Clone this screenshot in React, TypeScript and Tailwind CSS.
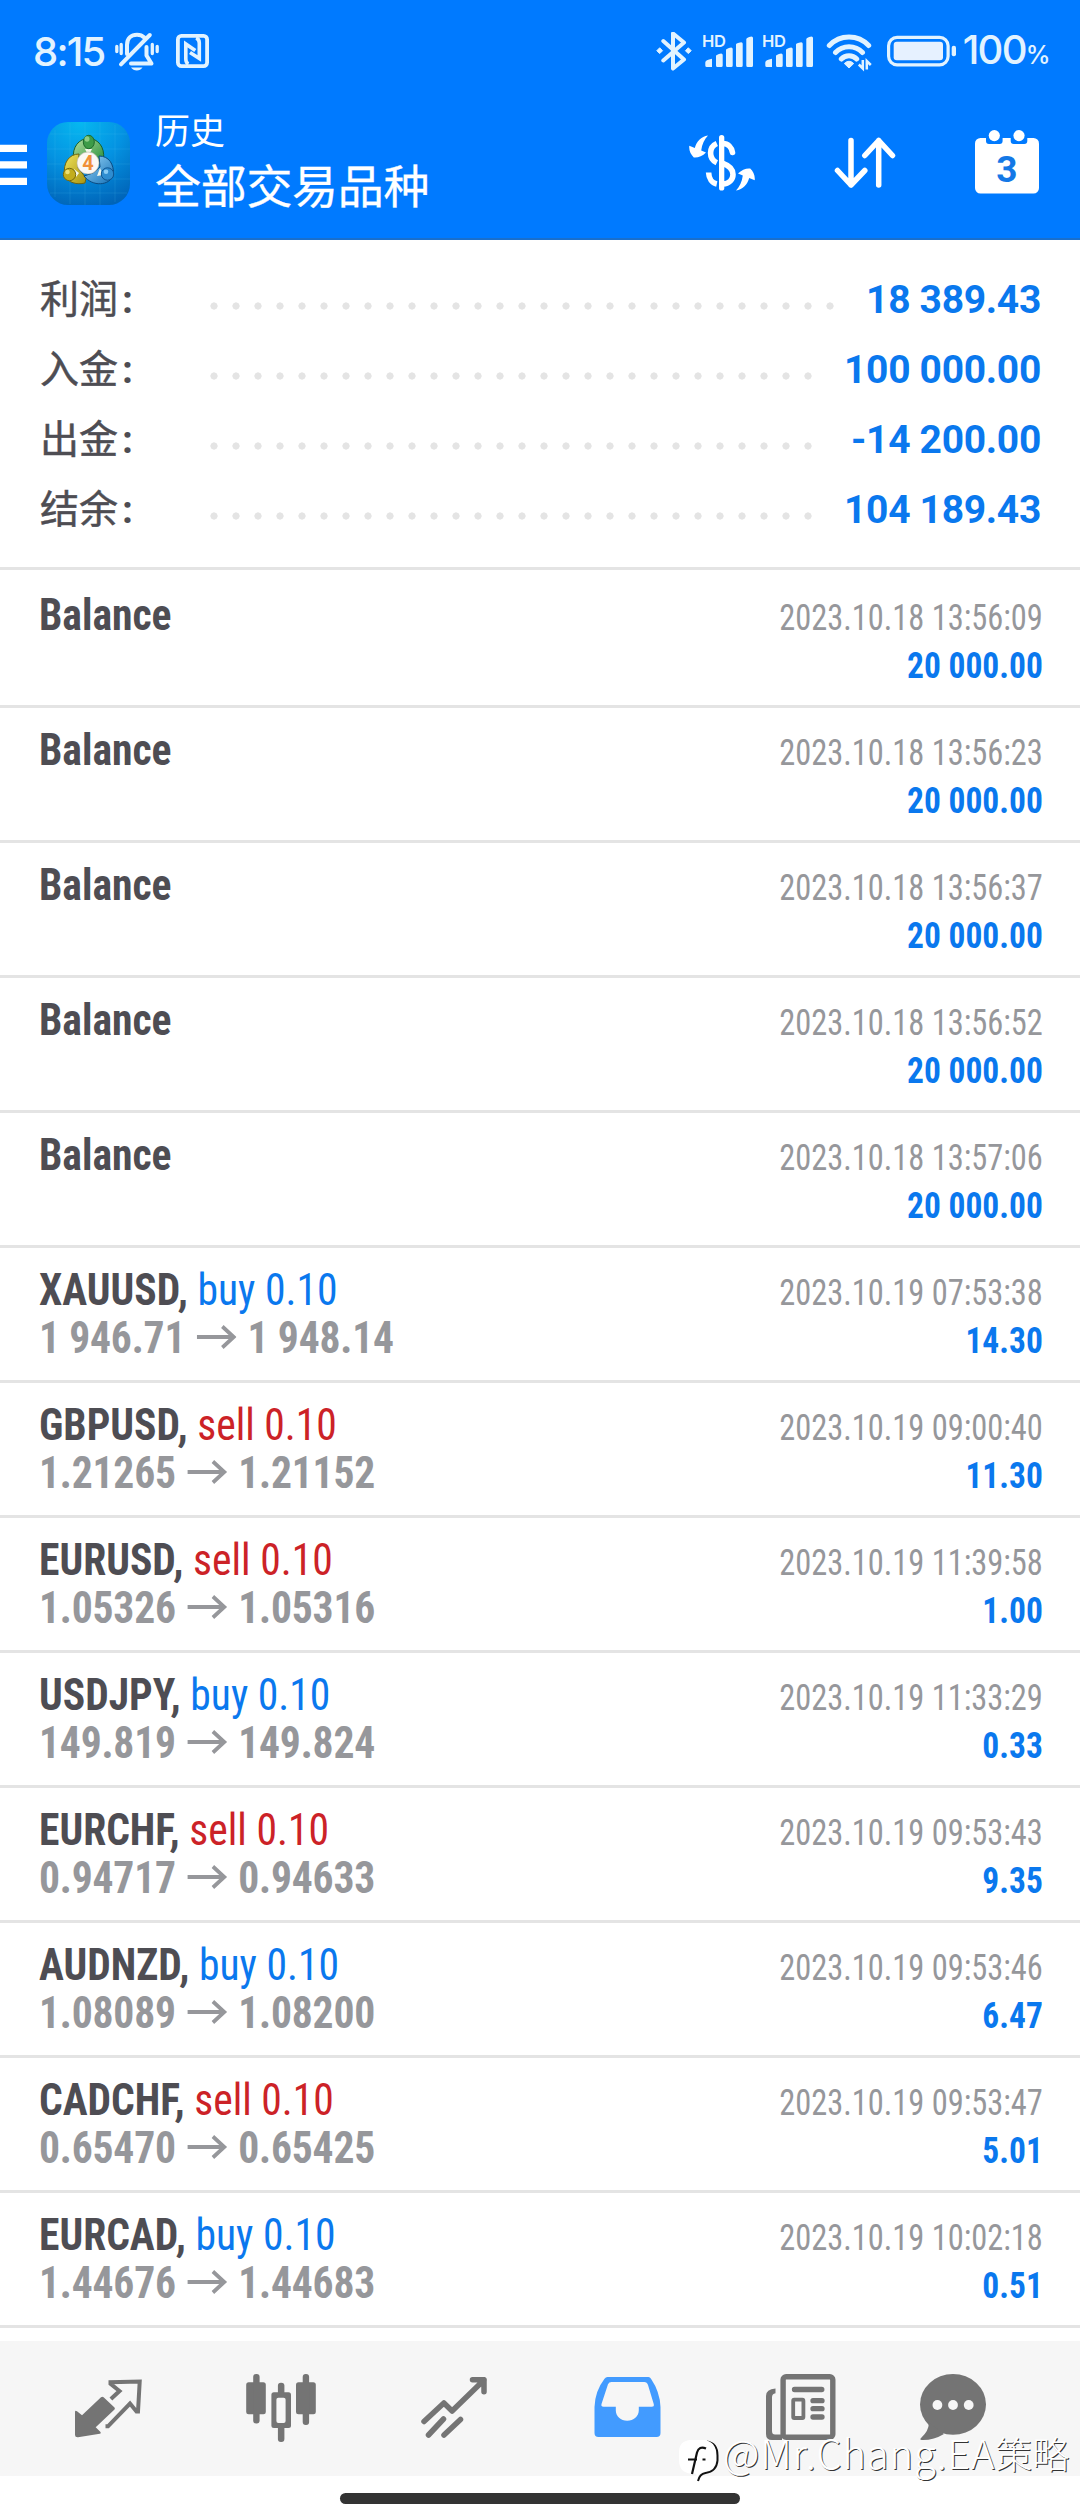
import type { ReactNode } from "react";

const summary = [
  { label: "利润", value: "18 389.43", dots: "w-[638px]" },
  { label: "入金", value: "100 000.00", dots: "w-[616px]" },
  { label: "出金", value: "-14 200.00", dots: "w-[616px]" },
  { label: "结余", value: "104 189.43", dots: "w-[616px]" },
];

const balances = [
  { time: "2023.10.18 13:56:09", amount: "20 000.00" },
  { time: "2023.10.18 13:56:23", amount: "20 000.00" },
  { time: "2023.10.18 13:56:37", amount: "20 000.00" },
  { time: "2023.10.18 13:56:52", amount: "20 000.00" },
  { time: "2023.10.18 13:57:06", amount: "20 000.00" },
];

const deals = [
  { symbol: "XAUUSD", side: "buy", open: "1 946.71", close: "1 948.14", time: "2023.10.19 07:53:38", profit: "14.30" },
  { symbol: "GBPUSD", side: "sell", open: "1.21265", close: "1.21152", time: "2023.10.19 09:00:40", profit: "11.30" },
  { symbol: "EURUSD", side: "sell", open: "1.05326", close: "1.05316", time: "2023.10.19 11:39:58", profit: "1.00" },
  { symbol: "USDJPY", side: "buy", open: "149.819", close: "149.824", time: "2023.10.19 11:33:29", profit: "0.33" },
  { symbol: "EURCHF", side: "sell", open: "0.94717", close: "0.94633", time: "2023.10.19 09:53:43", profit: "9.35" },
  { symbol: "AUDNZD", side: "buy", open: "1.08089", close: "1.08200", time: "2023.10.19 09:53:46", profit: "6.47" },
  { symbol: "CADCHF", side: "sell", open: "0.65470", close: "0.65425", time: "2023.10.19 09:53:47", profit: "5.01" },
  { symbol: "EURCAD", side: "buy", open: "1.44676", close: "1.44683", time: "2023.10.19 10:02:18", profit: "0.51" },
];

function Signal({ className }: { className: string }) {
  return (
    <svg className={className} width="50" height="40" viewBox="0 0 50 40" fill="currentColor">
      <text x="-1" y="15" fontSize="16.5" fontWeight="600" fontFamily="Inter, sans-serif" letterSpacing="-0.3">
        HD
      </text>
      <path d="M2.3 30.5q0-2.5 6.7-3.7V35H3.8q-1.5 0-1.5-1.5zM13 24q0-1.5 5.2-2.5 1.5 0 1.5 1.5v10.5q0 1.5-1.5 1.5h-3.7q-1.5 0-1.5-1.5zM23 18q0-1.5 5.2-2.5 1.5 0 1.5 1.5v16.5q0 1.5-1.5 1.5h-3.7q-1.5 0-1.5-1.5zM33 12.5q0-1.5 5.2-2.3 1.5 0 1.5 1.5v21.8q0 1.5-1.5 1.5h-3.7q-1.5 0-1.5-1.5zM43.3 7q0-1.5 5.2-2.6 1.5 0 1.5 1.5v27.6q0 1.5-1.5 1.5h-3.7q-1.5 0-1.5-1.5z" />
    </svg>
  );
}

function StatusBar() {
  return (
    <div className="flex h-[104px] items-center text-[#e2f3ff]">
      <span className="ml-[33px] w-[82px] font-[Inter,sans-serif] text-[40px] leading-[48px] font-medium tracking-[-1.8px]">
        8:15
      </span>
      <svg width="44" height="40" viewBox="0 0 44 40" fill="none" stroke="currentColor" strokeLinecap="round">
        <path d="M1.8 14.5v5M6.2 12.5v9M37.3 12.5v9M42.2 14.5v5" strokeWidth="3.3" />
        <path d="M12 22V13C12 6 16.5 2.7 22 2.7c3 0 5.5 1 7.3 2.8M31.5 15v8.5l5 8H16" strokeWidth="4" strokeLinejoin="round" />
        <path d="M6 32.3 34.8 3" strokeWidth="4" />
        <path d="M16 35.5h11.5q-2 3-5.7 3t-5.800-3z" fill="currentColor" stroke="none" />
      </svg>
      <svg className="ml-[17px]" width="33" height="40" viewBox="0 0 33 40" fill="none" stroke="currentColor">
        <rect x="1.9" y="3.9" width="29.2" height="30.2" rx="3.5" strokeWidth="3.8" />
        <path d="M12.5 32q-2.7-1-2.7-5V12l9.5 6.5M20 6q3.3 1 3.3 5v15.5L14 20.5" strokeWidth="3.6" />
      </svg>

      <svg className="ml-auto" width="36" height="40" viewBox="0 1 36 40" fill="none" stroke="currentColor">
        <path d="M7.3 10 28 28.5l-11 9V2.5l11 9L7.3 29.5" strokeWidth="4" strokeLinecap="round" strokeLinejoin="round" />
        <path d="M.8 19.7l2.9-2.9 2.9 2.9-2.9 2.9zM29.4 19.7l2.9-2.9 2.9 2.9-2.9 2.9z" fill="currentColor" strokeLinejoin="round" />
      </svg>
      <Signal className="ml-[11px]" />
      <Signal className="ml-[10px]" />
      <svg className="ml-[13px]" width="46" height="40" viewBox="0 -2 46 40" fill="none" stroke="currentColor">
        <path d="M3.3 11.5a27 27 0 0 1 39.4 0M9.5 18.5a18.5 18.5 0 0 1 27 0M15.3 25a10.5 10.5 0 0 1 15.4 0" strokeWidth="5" strokeLinecap="round" />
        <path d="M18.3 29.5q4.7-4.5 9.4 0L23 34z" fill="currentColor" strokeLinejoin="round" />
        <path d="M36.8 26v8.5l-4-4M40.8 35.5V27l4 4" strokeWidth="2.5" />
      </svg>
      <svg className="ml-[15px]" width="69" height="40" viewBox="0 -3 69 40" fill="currentColor">
        <rect x="1.6" y="2.3" width="59.5" height="27.5" rx="8.5" fill="none" stroke="currentColor" strokeWidth="3.2" />
        <rect x="6.7" y="6.7" width="49.3" height="18.6" rx="3" fill="#e6f1ff" />
        <rect x="64.7" y="10.7" width="4.3" height="10.6" rx="2" />
      </svg>
      <span className="mr-[29.5px] ml-[7px] flex items-baseline font-[Inter,sans-serif] text-[40px] leading-[48px] font-medium tracking-[-1.8px]">
        100<span className="text-[25px] tracking-normal">%</span>
      </span>
    </div>
  );
}

function AppLogo() {
  return (
    <svg className="-mt-2 ml-5" width="83" height="83" viewBox="0 0 83 83">
      <defs>
        <radialGradient id="tile" cx="0.4" cy="0" r="1.05">
          <stop offset="0" stopColor="#06b8f0" />
          <stop offset="0.5" stopColor="#0493e2" />
          <stop offset="1" stopColor="#0064b8" />
        </radialGradient>
        <linearGradient id="green" x1="0" y1="0" x2="1" y2="1">
          <stop offset="0" stopColor="#b4dfa0" />
          <stop offset="1" stopColor="#1f8a35" />
        </linearGradient>
        <linearGradient id="yellow" x1="0" y1="0" x2="1" y2="1">
          <stop offset="0" stopColor="#f0e35c" />
          <stop offset="1" stopColor="#a89410" />
        </linearGradient>
        <linearGradient id="blue" x1="0" y1="0" x2="1" y2="1">
          <stop offset="0" stopColor="#9ad6f7" />
          <stop offset="1" stopColor="#1270b8" />
        </linearGradient>
      </defs>
      <rect width="83" height="83" rx="21" fill="url(#tile)" />
      <path d="M8 8v67M23 1v81M38 0v83M53 0v83M68 3v77M3 12h77M0 27h83M0 42h83M0 57h83M3 71h77" stroke="#5cc8f5" strokeOpacity="0.15" />
      <path d="M26.5 37C25 25 32 16.5 41.5 16.5S58 25 56.5 37l-5 6-9-12-9 10z" fill="url(#green)" stroke="#165f2b" />
      <path d="M17.5 53C16 41 22 32 32 32l-1 14 8 10-1 5c-8 2-17 0-20.5-8z" fill="url(#yellow)" stroke="#6c6412" />
      <path d="M52 34c10 0 15 8 14.5 19-4 11-21 12-29.5 1l9-3 7-6z" fill="url(#blue)" stroke="#0b4a80" />
      <path d="M38 27h7l-2 4h-3zM27 47l5 4-3 4zM53 46l3 7-6 1z" fill="#f3f8ec" />
      <ellipse cx="41.8" cy="20" rx="5.5" ry="6.7" fill="#3d9b48" stroke="#1c6a2c" />
      <circle cx="22.5" cy="52.5" r="6.2" fill="#c2ad1d" stroke="#776b10" />
      <circle cx="60.5" cy="52" r="6.2" fill="#2f8dd0" stroke="#0f5591" />
      <ellipse cx="40" cy="17" rx="2.5" ry="2.7" fill="#8ccc86" />
      <circle cx="20.5" cy="50" r="2.3" fill="#ece072" />
      <circle cx="59" cy="49.8" r="2.3" fill="#8accf4" />
      <circle cx="41" cy="41" r="11" fill="#fbf8f4" stroke="#b9b6a8" strokeWidth="0.6" />
      <text x="41" y="48" textAnchor="middle" fontSize="20" fontWeight="700" fontFamily="Roboto, sans-serif" fill="#f09038">
        4
      </text>
    </svg>
  );
}

function Toolbar() {
  return (
    <div className="flex h-[136px] items-start border-b-2 border-[#1a6fcb] pt-[26px] text-white">
      <svg width="27" height="64" viewBox="0 0 27 64" fill="currentColor">
        <path d="M0 14.7h27V22H0zM0 31.2h27v7.3H0zM0 47.7h27V55H0z" />
      </svg>
      <AppLogo />
      <div className="-mt-[23px] ml-[25px] font-['Noto_Sans_CJK_SC',sans-serif]">
        <p className="text-[35px] leading-[44px]">历史</p>
        <h1 className="mt-[4px] text-[46px] leading-[56px] tracking-[-0.3px] [-webkit-text-stroke:0.3px_white]">
          全部交易品种
        </h1>
      </div>
      <div className="mr-[41px] ml-auto flex gap-[79px]">
        <svg width="66" height="64" viewBox="0 -5 66 64" fill="none" stroke="currentColor">
          <rect x="30" y="0" width="5.3" height="55.5" rx="2.6" fill="currentColor" stroke="none" />
          <path d="M27.8 8.5C19.5 12 19.5 24 27.8 27.8M19.6 37.5c.2 6 3.5 10.5 8.2 11.5" strokeWidth="5.6" />
          <path d="M34 8.5c5 0 8.5 3.5 9.5 9" strokeWidth="5.6" strokeLinecap="round" />
          <path d="M34 28.5c7 2.5 10 6 10 11s-4 9.5-10 9.5" strokeWidth="5.6" />
          <g fill="currentColor" stroke="none">
            <path d="M19 .5C12 1.5 7.5 6.5 5.8 13L.3 10.8c-.6 4.5 1.5 9 4.5 11.7 3.8.5 8.7-1.3 12.2-5l-4.8-2C13 9.5 15.5 4 19 .5z" />
            <path d="M19 .5C12 1.5 7.5 6.5 5.8 13L.3 10.8c-.6 4.5 1.5 9 4.5 11.7 3.8.5 8.7-1.3 12.2-5l-4.8-2C13 9.5 15.5 4 19 .5z" transform="rotate(180 33 28)" />
          </g>
        </svg>
        <svg width="62" height="64" viewBox="0 -7 62 64" fill="none" stroke="currentColor" strokeWidth="5.5" strokeLinecap="round" strokeLinejoin="round">
          <path d="M17 3.5V48M3.5 33.5 17 48l13.8-14.5M44.7 48V3.5M30.8 18.5 44.7 3.5l13.8 15" />
        </svg>
        <svg width="64" height="64" viewBox="0 0 64 64" fill="currentColor">
          <rect y="8" width="64" height="55.5" rx="5.5" />
          <path d="M11 4h16.6v7q0 3-3 3H14q-3 0-3-3zM35.7 4h16.6v7q0 3-3 3H38.7q-3 0-3-3z" fill="#007aff" />
          <circle cx="19.3" cy="5.6" r="5.6" />
          <circle cx="44" cy="5.6" r="5.6" />
          <text x="31.8" y="51.8" textAnchor="middle" fontSize="37" fontWeight="700" fontFamily="Roboto, sans-serif" fill="#1478e6">
            3
          </text>
        </svg>
      </div>
    </div>
  );
}

function Row({ left, time, amount }: { left: ReactNode; time: string; amount: string }) {
  return (
    <li className="flex h-[135px] justify-between border-b-3 border-[#e4e4e4] pr-[37.5px] pl-[39px] font-['Roboto_Condensed',Roboto,sans-serif]">
      <div className="origin-left scale-x-[0.945] pt-[18px] text-[44px] leading-[48px]">{left}</div>
      <div className="pt-[21px] text-right text-[36px] leading-[48px]">
        <p className="origin-right scale-x-90 text-[#96979b]">{time}</p>
        <p className="origin-right scale-x-[0.93] font-bold text-[#0a78ee]">{amount}</p>
      </div>
    </li>
  );
}

function PriceArrow() {
  return (
    <svg className="-mt-[3px]" width="42" height="24" viewBox="0 0 42 24" fill="none" stroke="currentColor" strokeWidth="4">
      <path d="M0 12h39M27 1.5 39 12 27 22.5" />
    </svg>
  );
}

function BottomNav() {
  return (
    <nav className="mt-[13px] flex h-[135px] items-start bg-[#f6f6f6] pt-[33px] text-[#747474]">
      <svg className="ml-[75px]" width="67" height="68" viewBox="0 0 67 68" fill="none" stroke="currentColor">
        <path d="M0 38q0-2 2-.8l5 4.1L26 23.3q1.3-1.3 2.6 0L39.5 33.5q.8 1 0 2L20.7 53.3l4.8 4.7q1 1.5-.7 1.8L3 63.3Q0 63.5 0 61z" fill="currentColor" stroke="none" />
        <path d="M35.9 25 44.5 17l-9-7.3v-1.5L64.7 7.5 63 37.5h-1.5L55 29.5 33 52.3h-2.5" strokeWidth="4" />
      </svg>
      <svg className="ml-[104px]" width="70" height="68" viewBox="0 0 70 68" fill="currentColor">
        <rect x="0.2" y="8.3" width="19.6" height="32" rx="2.5" />
        <rect x="7.2" width="6.4" height="49.5" rx="3" />
        <rect x="50" y="8.3" width="19.8" height="32" rx="2.5" />
        <rect x="56.7" width="6.4" height="51" rx="3" />
        <rect x="31.9" y="8.7" width="6.5" height="59.3" rx="3" />
        <rect x="25.4" y="18.3" width="19.6" height="35.7" rx="2.5" />
        <rect x="30.4" y="23.7" width="9.2" height="25.3" rx="2" fill="#f6f6f6" />
      </svg>
      <svg className="ml-[105px]" width="66" height="68" viewBox="0 0 66 68" fill="none" stroke="currentColor" strokeWidth="5.5" strokeLinecap="round" strokeLinejoin="round">
        <path d="M3 47.5 22.9 29l8.2 8L63 6M51.5 5.7H63v12" />
        <path d="M7.5 61 22.5 45M23 61l16.5-15.5" />
      </svg>
      <svg className="ml-[107px]" width="67" height="68" viewBox="0 0 67 68" fill="#429bff" fillRule="evenodd">
        <path d="M13.5 3h41q1.5 0 2.5 1.7Q66 18 66.5 33v26q0 4-4 4h-58q-4 0-4-4V33Q1 17 10.5 4.7 11.8 3 13.5 3zM17.5 8q-2.5 0-3.5 2.3L7.5 30q-.7 2.7 2 2.7h12.3v3.5c0 6 5 10.5 11.4 10.5s11.6-4.5 11.6-10.5v-3.5h13q2.5 0 2-2.5L54 11q-1-3-3.7-3z" />
      </svg>
      <svg className="ml-[105px]" width="70" height="68" viewBox="0 0 70 68" fill="none" stroke="currentColor">
        <rect x="17.1" y="2.7" width="49.7" height="60.5" rx="3" strokeWidth="5.4" />
        <path d="M9.5 14.5v4.8q-3.5.5-3.5 4V57q0 3.5 3 3.5h7V66H6q-6 0-6-6V22q0-7 9.5-7.5z" fill="currentColor" stroke="none" />
        <path d="M28.5 15.5h27.3M47 26.7h9M47 34.7h9M47 43h9" strokeWidth="5.3" strokeLinecap="round" />
        <rect x="27.2" y="25.7" width="10.2" height="18.3" rx="1" strokeWidth="3.8" />
      </svg>
      <svg className="ml-[84px]" width="66" height="68" viewBox="0 0 66 68" fill="currentColor">
        <ellipse cx="33" cy="30.4" rx="33" ry="30.4" />
        <path d="M8.5 48q1.5 7-7 15.5-3 3 1.5 2.5 11 0 21-6z" />
        <g fill="#f6f6f6">
          <circle cx="17.4" cy="31" r="4.9" />
          <circle cx="33" cy="31" r="4.9" />
          <circle cx="48.7" cy="31" r="4.9" />
        </g>
      </svg>
    </nav>
  );
}

function Watermark() {
  return (
    <div className="absolute top-[2436px] left-[679px] flex items-start text-white">
      <svg width="40" height="48" viewBox="0 0 40 48" fill="none">
        <path d="M28 5.5q10.5 2 10.5 14v5q-1 11-12 12.5-6 1-7.5 8" stroke="#111" strokeWidth="2" />
        <path d="M11 4h15q11 2 11 14v4q0 12-11 13.5-6 1-8 6l-1-4H11Q0 36 0 24v-8Q0 5 11 4z" fill="#fff" />
        <path d="M27 12.5q-7-3-9 4L13 38M9 23.5h9M23.5 23.5h3" stroke="#111" strokeWidth="2.2" />
      </svg>
      <p className="-mt-[4px] ml-[4px] flex items-baseline font-['Noto_Sans_CJK_SC',sans-serif] text-[40px] leading-[40px] font-light tracking-[0.8px] text-shadow-[1px_1px_0_#333]">
        @Mr.Chang.EA<span className="text-[37px] tracking-normal">策略</span>
      </p>
    </div>
  );
}

export default function App() {
  return (
    <div className="relative h-[2520px] w-[1080px] overflow-hidden bg-white">
      <header className="bg-[#007aff]">
        <StatusBar />
        <Toolbar />
      </header>

      <section className="border-b-3 border-[#e4e4e4] px-[40px] pt-[25px] pb-[22px]">
        {summary.map((s) => (
          <div key={s.label} className="flex h-[70px] items-center">
            <div className="flex w-[162.5px] items-center text-[#4e4d53]">
              <span className="mb-[9px] font-['Noto_Sans_CJK_SC',sans-serif] text-[39px] leading-[46px] [-webkit-text-stroke:0.5px_#4e4d53]">
                {s.label}
              </span>
              <span className="ml-[4px] font-[Roboto,sans-serif] text-[39px] leading-[70px] font-bold">:</span>
            </div>
            <div
              className={`mt-3 h-[8px] bg-[radial-gradient(circle,#e4e4e4_3.3px,transparent_3.9px)] bg-[length:22px_8px] ${s.dots}`}
            />
            <span className="-mr-[1px] ml-auto font-[Roboto,sans-serif] text-[39px] leading-[70px] font-bold tracking-[-0.3px] text-[#0a78ee]">
              {s.value}
            </span>
          </div>
        ))}
      </section>

      <ul className="pt-[3px]">
        {balances.map((b) => (
          <Row
            key={b.time}
            left={<p className="font-bold text-[#4e4d53]">Balance</p>}
            time={b.time}
            amount={b.amount}
          />
        ))}
        {deals.map((d) => (
          <Row
            key={d.symbol}
            left={
              <>
                <p>
                  <span className="font-bold text-[#4e4d53]">{d.symbol},</span>{" "}
                  <span className={d.side === "buy" ? "text-[#0a78ee]" : "text-[#cc2227]"}>{d.side} 0.10</span>
                </p>
                <div className="flex items-center font-bold tracking-[-0.2px] text-[#96979b]">
                  <span className="mr-[12px]">{d.open}</span>
                  <PriceArrow />
                  <span className="ml-[12px]">{d.close}</span>
                </div>
              </>
            }
            time={d.time}
            amount={d.profit}
          />
        ))}
      </ul>

      <BottomNav />
      <div className="mx-auto mt-[17px] h-[11px] w-[400px] rounded-full bg-[#333333]" />
      <Watermark />
    </div>
  );
}
